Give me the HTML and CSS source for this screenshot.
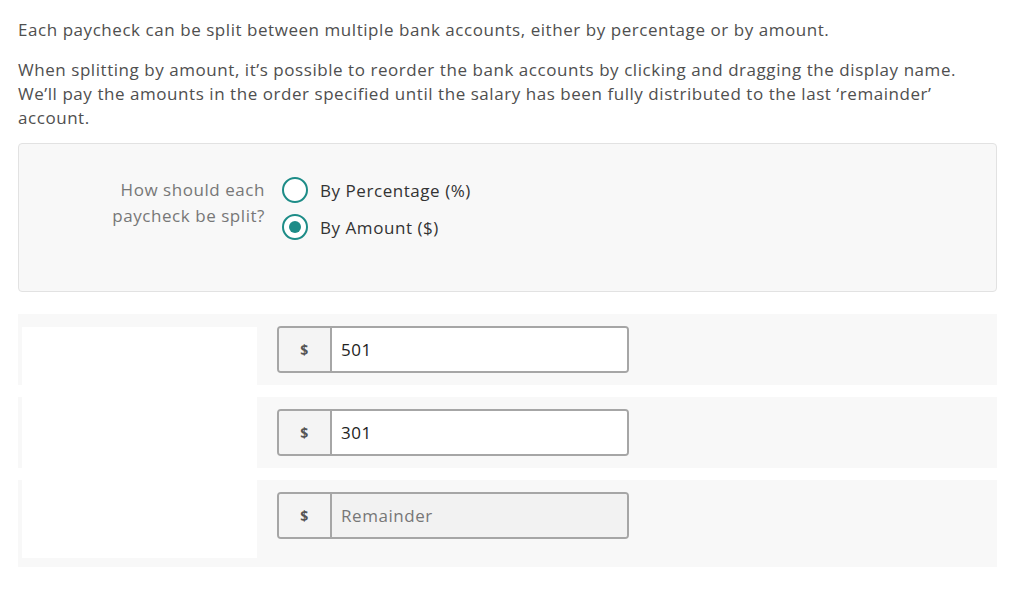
FILE: index.html
```html
<!DOCTYPE html>
<html lang="en">
<head>
    <meta charset="UTF-8">
    <title>Paycheck Split</title>
    <link rel="stylesheet" href="styles.css">
</head>
<body>
    <div class="page">
        <p class="intro">Each paycheck can be split between multiple bank accounts, either by percentage or by amount.</p>
        <p class="intro">When splitting by amount, it’s possible to reorder the bank accounts by clicking and dragging the display name. We’ll pay the amounts in the order specified until the salary has been fully distributed to the last ‘remainder’ account.</p>

        <div class="split-box">
            <div class="split-label">How should each<br>paycheck be split?</div>
            <div class="split-options">
                <label class="radio">
                    <input type="radio" name="split" value="percentage">
                    <span class="radio-circle"></span>
                    By Percentage (%)
                </label>
                <label class="radio">
                    <input type="radio" name="split" value="amount" checked>
                    <span class="radio-circle"></span>
                    By Amount ($)
                </label>
            </div>
        </div>

        <div class="accounts">
            <div class="account-row">
                <div class="account-name"></div>
                <div class="amount-group">
                    <span class="addon">$</span>
                    <input class="amount" type="text" value="501">
                </div>
            </div>
            <div class="account-row">
                <div class="account-name"></div>
                <div class="amount-group">
                    <span class="addon">$</span>
                    <input class="amount" type="text" value="301">
                </div>
            </div>
            <div class="account-row last">
                <div class="account-name"></div>
                <div class="amount-group">
                    <span class="addon">$</span>
                    <input class="amount" type="text" placeholder="Remainder" disabled>
                </div>
            </div>
            <div class="name-mask"></div>
        </div>
    </div>
</body>
</html>
```

FILE: styles.css
```css
body {
    margin: 0;
    background-color: #fff;
    font-family: "Open Sans", Arial, sans-serif;
    color: #555;
    letter-spacing: 0.55px;
}
.page {
    width: 979px;
    padding: 18px 0 0 18px;
}
.intro {
    margin: 0 0 16px;
    font-size: 17px;
    line-height: 24px;
    color: #4f4f4f;
}
.split-box {
    display: flex;
    margin-top: -3px;
    padding: 33px 0 51px;
    height: 63px;
    background-color: #f8f8f8;
    border: 1px solid #e2e2e2;
    border-radius: 4px;
}
.split-label {
    width: 246px;
    text-align: right;
    font-size: 17px;
    line-height: 26px;
    color: #777;
}
.split-options {
    margin-left: 17px;
}
.radio {
    display: flex;
    align-items: center;
    height: 26px;
    margin-bottom: 11px;
    font-size: 17px;
    color: #333;
    cursor: pointer;
}
.radio input {
    display: none;
}
.radio-circle {
    width: 22px;
    height: 22px;
    margin-right: 12px;
    border: 2px solid #1d8c87;
    border-radius: 50%;
    background-color: #fff;
    position: relative;
}
.radio input:checked + .radio-circle::after {
    content: "";
    position: absolute;
    top: 5px;
    left: 5px;
    width: 12px;
    height: 12px;
    border-radius: 50%;
    background-color: #1d8c87;
}
.accounts {
    position: relative;
    margin-top: 22px;
}
.account-row {
    display: flex;
    padding: 12px 0;
    margin-bottom: 12px;
    background-color: #f8f8f8;
}
.account-row.last {
    padding-bottom: 28px;
}
.account-name {
    width: 259px;
}
.amount-group {
    display: flex;
    width: 352px;
    height: 47px;
    box-sizing: border-box;
    border: 2px solid #a6a6a6;
    border-radius: 4px;
    overflow: hidden;
}
.addon {
    width: 51px;
    display: flex;
    align-items: center;
    justify-content: center;
    background-color: #f4f4f4;
    border-right: 2px solid #a6a6a6;
    font-size: 14px;
    font-weight: 700;
    color: #555;
}
.amount {
    flex: 1;
    border: none;
    outline: none;
    padding: 0 9px;
    font-family: "Open Sans", Arial, sans-serif;
    font-size: 17px;
    letter-spacing: 0.55px;
    color: #222;
    background-color: #fff;
}
.amount:disabled {
    background-color: #f2f2f2;
}
.amount::placeholder {
    color: #777;
}
.name-mask {
    position: absolute;
    top: 13px;
    left: 4px;
    width: 235px;
    height: 231px;
    background-color: #fff;
}
```
